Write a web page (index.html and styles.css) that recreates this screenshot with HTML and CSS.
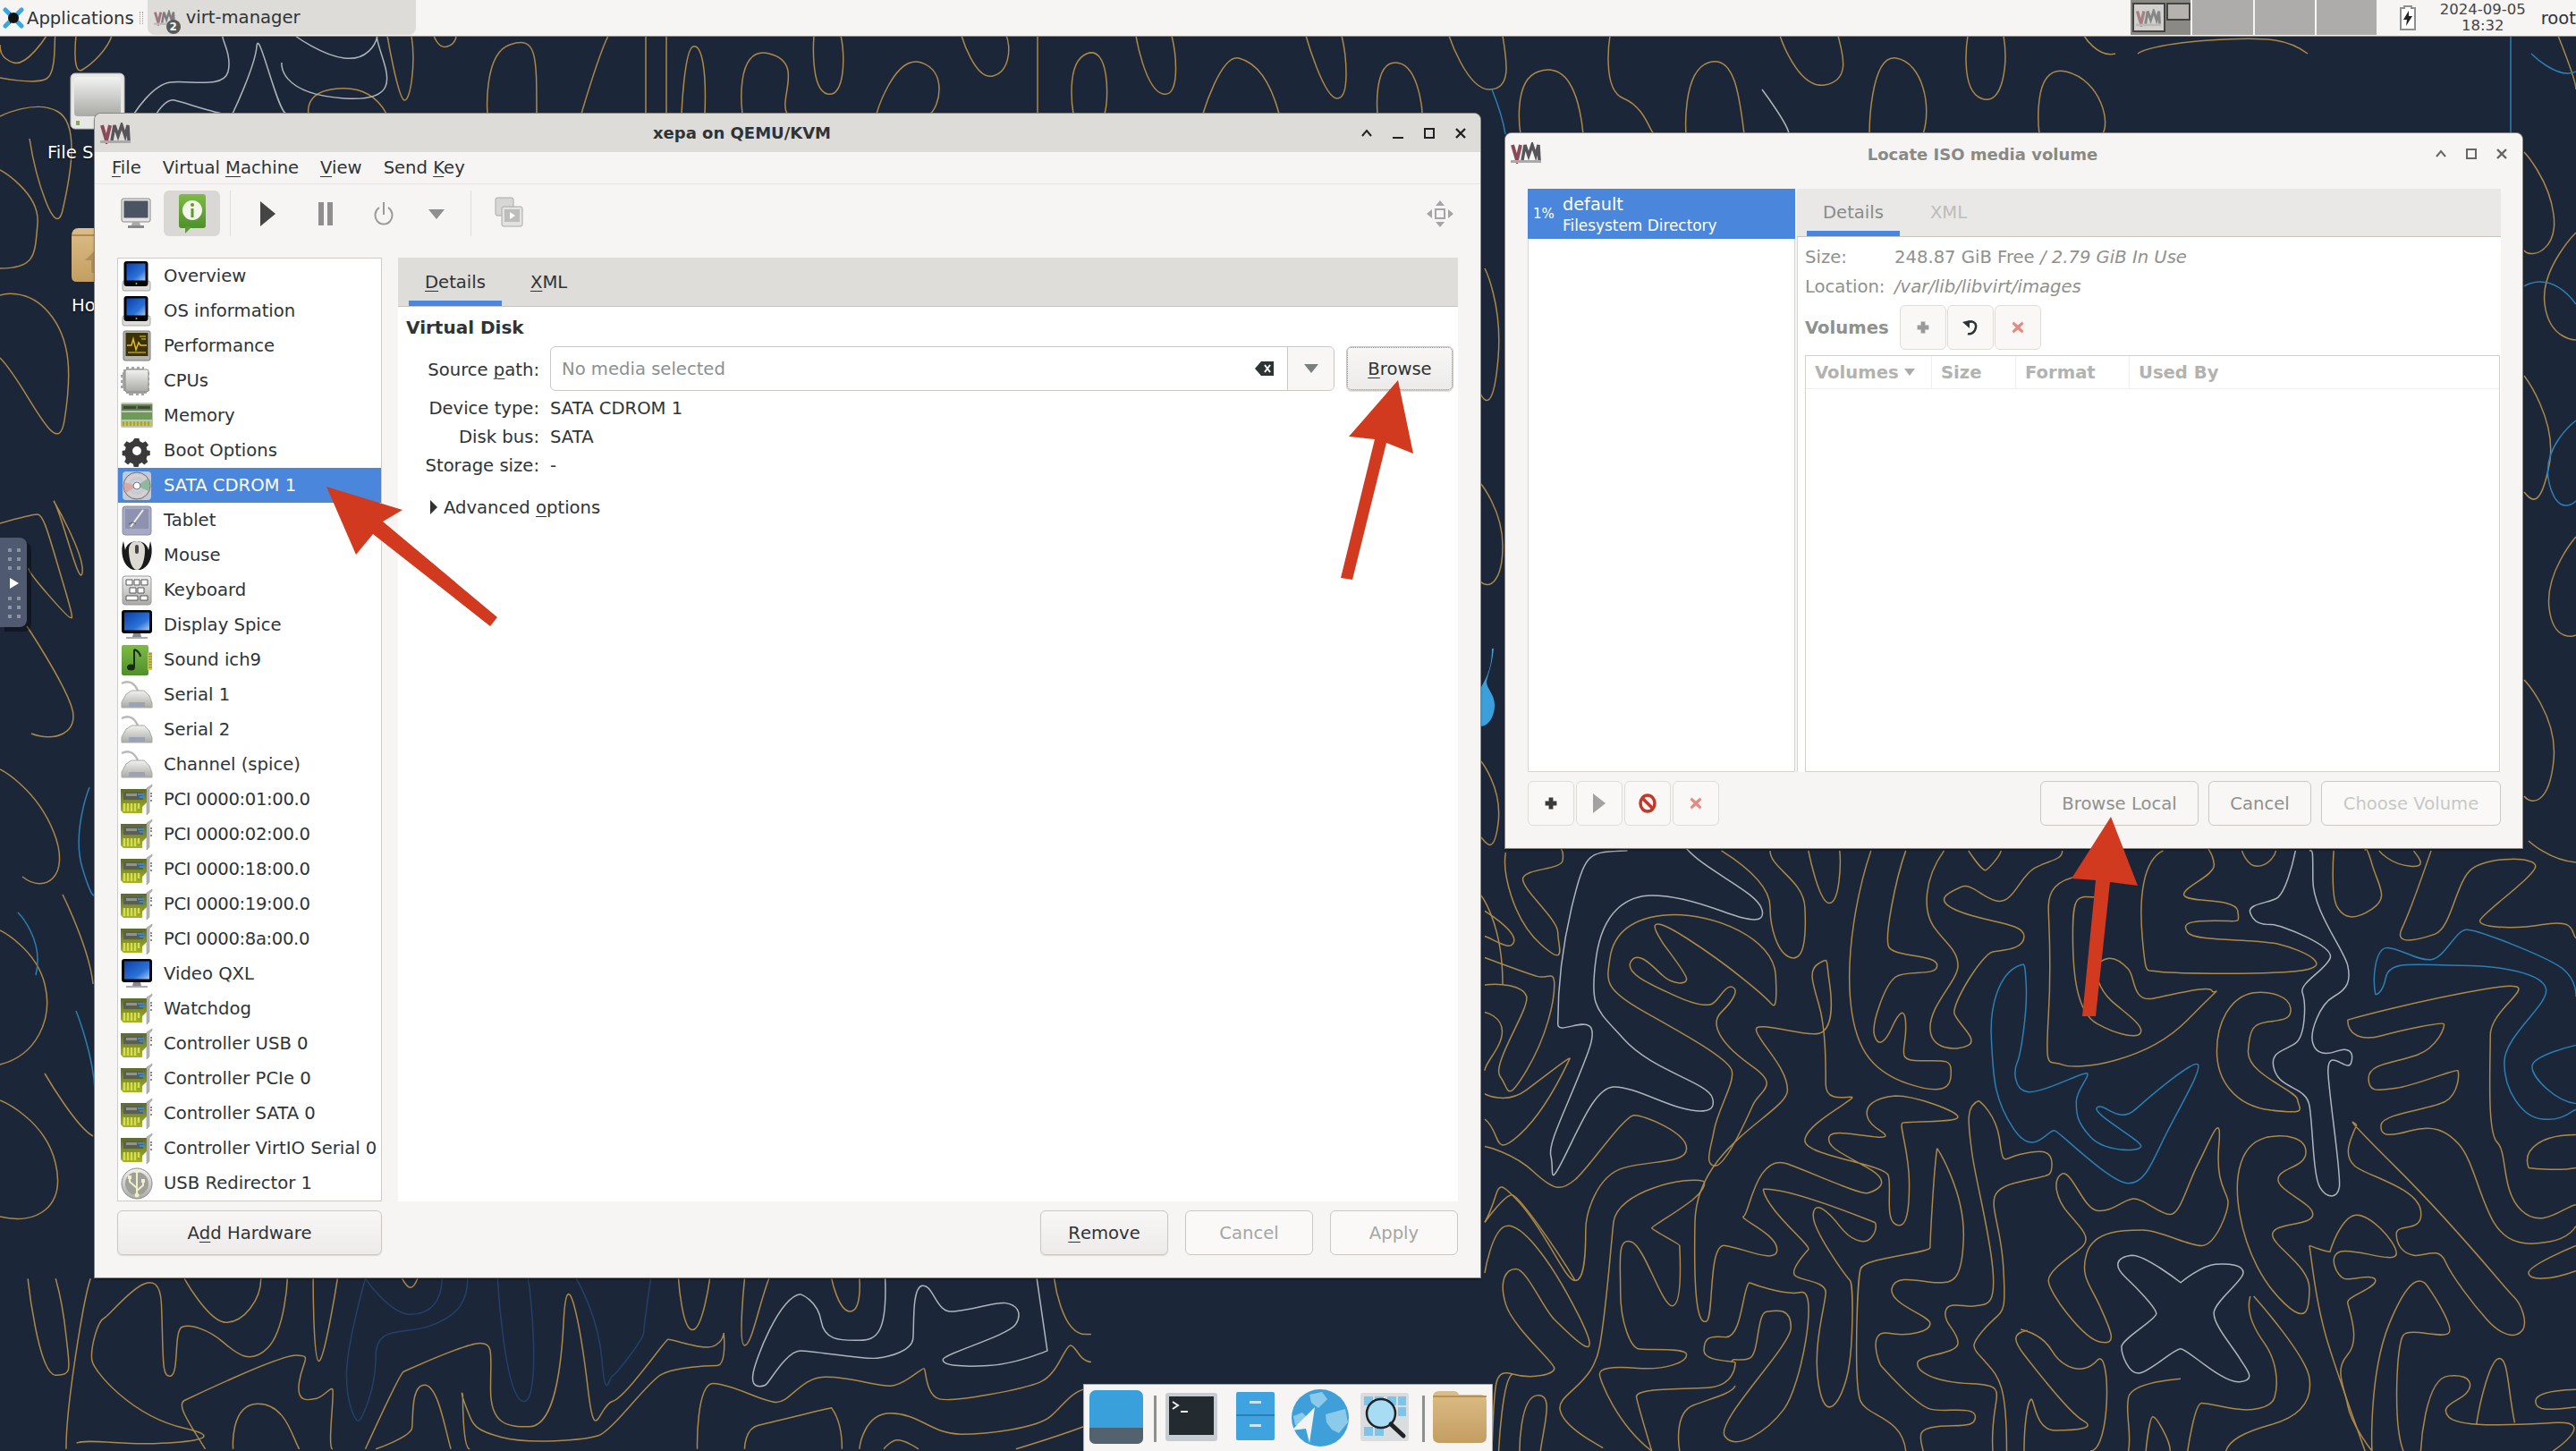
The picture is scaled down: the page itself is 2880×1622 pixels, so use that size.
FILE: index.html
```html
<!DOCTYPE html>
<html lang="en">
<head>
<meta charset="utf-8">
<title>virt-manager</title>
<link rel="stylesheet" href="styles.css">
</head>
<body>
<svg class="defs" width="0" height="0" aria-hidden="true">
  <defs>
    <linearGradient id="gScreen" x1="0" y1="0" x2="1" y2="1"><stop offset="0" stop-color="#0d3fa8"/><stop offset=".65" stop-color="#2a73d8"/><stop offset="1" stop-color="#a9c9ef"/></linearGradient>
    <linearGradient id="gSilver" x1="0" y1="0" x2="0" y2="1"><stop offset="0" stop-color="#f2f2f0"/><stop offset="1" stop-color="#a9a9a6"/></linearGradient>
    <linearGradient id="gOlive" x1="0" y1="0" x2="0" y2="1"><stop offset="0" stop-color="#5d6a2a"/><stop offset="1" stop-color="#a3b42a"/></linearGradient>
    <linearGradient id="gGreen" x1="0" y1="0" x2="0" y2="1"><stop offset="0" stop-color="#7dbb45"/><stop offset="1" stop-color="#4f8f2d"/></linearGradient>
    <linearGradient id="gFolder" x1="0" y1="0" x2="0" y2="1"><stop offset="0" stop-color="#dcbd86"/><stop offset="1" stop-color="#c39e62"/></linearGradient>
    <radialGradient id="gDisc"><stop offset="0" stop-color="#eee"/><stop offset=".5" stop-color="#c3c8d4"/><stop offset=".8" stop-color="#d8d2cf"/><stop offset="1" stop-color="#c4c8c8"/></radialGradient>
    <symbol id="i-ov" viewBox="0 0 36 36"><rect x="2" y="23" width="31" height="11" rx="2" fill="#dcdcd8" stroke="#a5a5a0"/><rect x="3.500" y="1" width="27" height="28" rx="3" fill="#050505"/><rect x="6.500" y="3.500" width="21" height="19" fill="url(#gScreen)"/><circle cx="17.500" cy="26" r="1" fill="#9acd32"/></symbol>
    <symbol id="i-perf" viewBox="0 0 36 36"><rect x="3" y="1" width="30" height="33" rx="2" fill="#b4b4ae" stroke="#777"/><rect x="5.500" y="3" width="25" height="26" fill="#3b3206"/><path d="M7 17h5l2-7 3 12 3-8 2 3h7" fill="none" stroke="#e3b92a" stroke-width="1.500"/><path d="M21 7h7M23 10h5M8 25h20" stroke="#b99b1c" stroke-width="1.500"/></symbol>
    <symbol id="i-cpu" viewBox="0 0 36 36"><path d="M3 8V5h3V2h3v2h3V2h3v2h3V2h3v2h3V2h2v3h3v3h3v3h-2v3h2v3h-2v3h2v3h-2v3h2v3h-3v3h-3v2h-3v-2h-3v2h-3v-2h-3v2H9v-2H6v-3H3v-3H0v-3h2v-3H0v-3h2v-3H0v-3h2V8z" fill="#a5a5a2"/><rect x="5" y="5" width="26" height="25" rx="2" fill="url(#gSilver)" stroke="#8a8a87"/></symbol>
    <symbol id="i-mem" viewBox="0 0 36 36"><rect x="0" y="3" width="36" height="28" rx="2" fill="#bfc5b2"/><rect x="1" y="5" width="34" height="7" fill="#5f8150"/><rect x="1" y="14" width="34" height="8" fill="#6e9a5a"/><rect x="3" y="7" width="14" height="3" fill="#3d4a3a"/><rect x="19" y="7" width="14" height="3" fill="#3d4a3a"/><rect x="1" y="24" width="34" height="5" fill="#c9c24a"/><path d="M3 24v5M7 24v5M11 24v5M15 24v5M19 24v5M23 24v5M27 24v5M31 24v5" stroke="#7f8a30"/></symbol>
    <symbol id="i-gear" viewBox="-4 -2 44 44"><path d="M15 3h6l1 4 4 2 4-2 4 5-3 3 1 4 4 1v6l-4 1-1 4 2 4-5 4-3-3-4 2-1 4h-6l-1-4-4-2-3 3-5-4 2-4-1-4-4-1v-6l4-1 1-4-3-3 4-5 4 2 4-2z" fill="#3a3a3a"/><circle cx="18" cy="20" r="6" fill="#fff"/></symbol>
    <symbol id="i-cd" viewBox="0 0 36 36"><rect x="2" y="2" width="32" height="32" rx="4" fill="#c2c9d8"/><circle cx="18" cy="18" r="15" fill="url(#gDisc)" stroke="#6d6d75"/><path d="M18 18 30 10A15 15 0 0 1 31 24z" fill="#8fb89a"/><path d="M18 18 6 26A15 15 0 0 1 4 14z" fill="#d8a8a4"/><circle cx="18" cy="18" r="4" fill="#fff" stroke="#777"/></symbol>
    <symbol id="i-tablet" viewBox="0 0 36 36"><rect x="2" y="2" width="32" height="32" rx="3" fill="#a6a9c4" stroke="#8a8da8"/><rect x="5" y="5" width="26" height="22" fill="#8f92ae"/><path d="M11 25 25 6" stroke="#eee" stroke-width="2"/><path d="M9 22q5-4 8 0" fill="none" stroke="#555"/></symbol>
    <symbol id="i-mouse" viewBox="0 0 36 36"><path d="M3 2C-1 14 2 30 14 34h8C34 30 37 14 33 2l-2 10c-1-6-6-10-13-10S6 6 5 12z" fill="#1a1a1a"/><path d="M9 12C9 5 13 2 18 2s9 3 9 10c0 9-3 22-9 22S9 21 9 12z" fill="#dcdad2"/><rect x="16" y="6" width="4" height="10" rx="2" fill="#444"/></symbol>
    <symbol id="i-kbd" viewBox="0 0 36 36"><rect x="2" y="2" width="32" height="32" rx="3" fill="url(#gSilver)" stroke="#999"/><path d="M6 6h7v6H6zM15 6h6v6h-6zM23 6h7v6h-7zM10 15h7v6h-7zM19 15h7v6h-7zM6 24h13v5H6zM22 24h8v5h-8z" fill="#fff" stroke="#555"/></symbol>
    <symbol id="i-disp" viewBox="0 0 36 36"><rect x="1" y="1" width="34" height="26" rx="3" fill="#050505"/><rect x="4" y="3.500" width="28" height="20" fill="url(#gScreen)"/><path d="M14 27h8l1 4h-10z" fill="#888"/><rect x="6" y="31" width="24" height="2" fill="#aaa"/></symbol>
    <symbol id="i-snd" viewBox="0 0 36 36"><rect x="1" y="1" width="30" height="34" rx="2" fill="url(#gGreen)"/><path d="M30 9h5v20h-5z" fill="#d7c44a"/><path d="M31 11h4M31 14h4M31 17h4M31 20h4M31 23h4M31 26h4" stroke="#80782a"/><path d="M15 6v19" stroke="#1a2a10" stroke-width="2"/><ellipse cx="11.500" cy="26" rx="4.500" ry="3.500" fill="#1a2a10"/><path d="M15 6q6 2 7 8" fill="none" stroke="#1a2a10" stroke-width="2"/></symbol>
    <symbol id="i-ser" viewBox="0 0 36 36"><path d="M1 5C10 0 16 6 19 13" fill="none" stroke="#b9b9b6" stroke-width="2.500"/><path d="M6 17 12 13h14l6 6 3 8v5H1v-6z" fill="url(#gSilver)" stroke="#a8a8a5"/><rect x="9" y="26" width="18" height="5" rx="1" fill="#9aa3b5"/></symbol>
    <symbol id="i-pci" viewBox="0 0 36 36"><path d="M0 6h29v15l-5 5v7H3l-3-3z" fill="url(#gOlive)"/><rect x="3" y="9" width="22" height="9" fill="#5b5f52"/><rect x="6" y="11" width="12" height="3" fill="#8d9488"/><path d="M19 11h7v2h-7zM21 14h5v2h-5z" fill="#3e89c8"/><path d="M4 22v9M8 22v9M12 22v9M16 22v9M20 22v6" stroke="#d8df4a" stroke-width="2.500"/><path d="M29 5 35 1v2l-3 3v26l-3 3z" fill="#b7b7b4" stroke="#8a8a86" stroke-width=".5"/><path d="M33 11h2M33 14h2M33 19h2" stroke="#888" stroke-width="2"/></symbol>
    <symbol id="i-usb" viewBox="0 0 36 36"><circle cx="18" cy="18" r="17" fill="url(#gSilver)" stroke="#8b8b88"/><circle cx="18" cy="18" r="13" fill="#9f9f9c"/><path d="M18 4v27M18 23 10 16v-4M18 26l7-6v-4" fill="none" stroke="#f1efc4" stroke-width="2"/><path d="m18 2 3 4h-6z" fill="#f1efc4"/><circle cx="18" cy="31" r="2.500" fill="#f1efc4"/><rect x="8" y="9" width="4" height="4" fill="#f1efc4"/><rect x="23" y="13" width="4" height="4" fill="#f1efc4"/></symbol>
    <symbol id="i-plus" viewBox="0 0 20 20"><path d="M7 2h6v5h5v6h-5v5H7v-5H2V7h5z"/></symbol>
    <symbol id="i-x" viewBox="0 0 20 20"><path d="M4 2 10 7l6-5 2 3-5 5 5 5-2 3-6-5-6 5-2-3 5-5-5-5z"/></symbol>
    <symbol id="i-vm" viewBox="0 0 34 24"><path d="M2 3 7 20 11 3" fill="none" stroke="#8a4a58" stroke-width="4"/><path d="M13 20 16 3l4 12 4-12 4 12 3-12 1 17" fill="none" stroke="#55555a" stroke-width="3.500"/><rect x="0" y="20" width="34" height="3" fill="#aaa"/></symbol>
  </defs>
</svg>

<svg class="wallpaper" width="2880" height="1622" viewBox="0 0 2880 1622" aria-hidden="true">
  <g class="gold">
    <path d="M52 40S30 75 15 70 0 55 0 50M0 87S40 95 52 88 60 40 62 40M85 40S80 85 92 78 120 55 125 40M0 130S40 110 65 125 78 200 70 235 40 200 33 155M0 190S45 215 42 250 40 300 0 300M0 330S30 320 55 350 80 420 72 470 30 430 0 400M60 560S95 620 92 640 68 570 60 560M0 585S35 575 42 575 55 600 70 650 80 690 78 690 30 640 32 635M30 700S70 760 80 790 60 830 35 820M0 860S40 880 60 930 50 1000 25 980M0 1040S40 1060 50 1100 40 1180 0 1190M0 1230S50 1250 62 1300 40 1370 0 1360M70 1000S100 1060 104 1100M50 1200S85 1260 104 1270"/>
    <path d="M345 127S340 105 370 100 420 105 432 127M433 40S445 110 452 112 465 70 460 40M485 40S490 55 500 52 510 40 510 40M545 127S540 60 570 50 600 60 600 127M650 127S670 60 680 40M722 127V40M745 127V40M762 127S765 55 775 52 790 80 788 127M830 127S820 50 860 60 870 110 880 127M910 40S905 100 925 105 945 60 940 40M980 127S1000 60 1030 70 1050 120 1040 127M1075 40S1090 90 1110 85 1130 50 1125 40M1160 127V40M1200 127S1190 70 1215 60 1240 110 1235 127M1270 40S1280 100 1300 105 1315 60 1310 40M1345 127S1365 60 1385 65 1420 90 1430 127M1460 40S1480 110 1495 110 1505 60 1500 40M1540 127S1535 70 1560 70 1590 120 1590 127M1620 40S1640 100 1665 100 1685 70 1680 40"/>
    <path d="M1700 150S1690 90 1720 80 1765 100 1770 150M1800 40S1790 100 1815 110 1845 150 1850 150M1885 150S1880 80 1910 70 1945 110 1950 150M1990 40S2010 100 2040 95 2060 60 2055 40M2090 150S2090 60 2120 65 2160 120 2150 150M2200 40S2190 100 2215 110 2245 70 2240 40M2280 150S2270 70 2310 80 2360 140 2350 150M2390 60S2400 50 2470 45 2560 45 2580 60M2330 40S2345 65 2365 60 2375 40M2420 150S2440 90 2480 100 2530 130 2520 150M2608 150V40M2640 150V40M2675 40S2680 100 2690 120 2712 150 2712 150M2750 150V40M2760 150S2765 55 2790 60 2790 150M2600 110S2640 85 2660 90 2700 120 2680 150"/>
    <path d="M2822 170S2850 200 2855 240 2830 290 2822 280M2880 260S2840 300 2845 340 2880 380 2880 380M2822 420S2860 470 2850 520 2830 560 2822 550M2880 600S2845 640 2850 680 2880 710 2880 710M2822 760S2860 800 2855 850 2830 900 2822 890M2860 40S2880 90 2880 100"/>
    <path d="M1660 300S1680 340 1675 400 1660 450 1655 440M1655 540S1680 570 1680 610 1665 660 1655 650M1655 850S1680 880 1675 920 1660 940 1655 935M1655 1000S1680 1030 1680 1100"/>
  </g>
  <g class="white">
    <path d="M330 40S360 62 385 65 420 50 422 40M150 127S170 95 190 92 250 100 255 80 245 40 250 40M175 127S185 110 195 112 235 125 250 127M260 127S285 75 287 52 310 125 320 127M315 70S310 105 385 110 425 70 421 40M1970 100S2000 140 2000 150"/>
  </g>
  <g class="blue">
    <path d="M2807 40V150M2830 60S2860 90 2880 80M2822 320S2850 300 2880 340M2880 470S2840 500 2850 540 2880 560 2880 560M100 880S80 930 92 970 106 1000 106 1000M85 1130S105 1180 106 1220M20 1020S50 1050 40 1090M1668 100S1680 130 1683 150"/>
  </g>
  <g transform="translate(1660,940) scale(.778,.435)">
    <g class="gold">
      <path d="M30 30C25 80 40 200 80 265S105 270 105 235 50 120 55 95 110 75 112 50 110 25 110 20M0 180S45 230 42 258 15 255 0 245M0 300S60 340 75 348 100 330 100 370 90 500 60 590 35 635 22 605 65 430 60 400 20 365 0 370M0 440S25 450 25 490 0 570 0 590M0 650S30 680 60 640 125 550 122 560 90 690 50 755 25 750 0 715"/>
      <path d="M0 785S40 800 70 850 110 900 130 870 200 705 215 705 290 750 290 790 240 820 200 840 145 960 145 1000 145 1130 130 1130 90 1010 50 930 25 900 0 980"/>
      <path d="M265 190C330 185 415 250 418 345S415 425 410 415 360 330 290 250 250 245 255 260 290 340 290 355 270 370 255 345 220 280 210 310 240 370 270 395 315 425 325 420 345 370 355 375 360 405 340 440 345 530 385 580 395 640 385 680 345 840 330 835 325 790 330 740 360 620 355 590 290 500 230 440 175 360 180 300 210 195 265 190"/>
      <path d="M340 25C380 70 410 120 410 170S420 290 440 300 462 240 460 170 410 70 410 25M465 25S480 160 495 160 512 60 510 25"/>
      <path d="M555 25C535 130 520 280 525 400S550 590 610 625 670 620 670 590 660 565 625 565 605 540 605 480 595 440 585 480 565 530 560 500 575 370 590 350 650 350 650 320 585 300 580 270 590 100 605 25"/>
      <path d="M660 25C630 100 630 180 645 220S680 280 680 320 640 420 640 480 680 540 695 525 680 470 675 445 715 290 730 285 775 280 775 245 720 210 680 180 670 130 685 118 720 155 740 155 770 90 790 70 830 50 830 25M695 25S715 80 720 75 740 40 742 25"/>
      <path d="M855 90C820 100 810 130 810 170S815 300 810 450 810 560 830 575 950 570 1010 460 1048 400 1045 385 990 395 960 405 935 350 925 330 900 290 885 310 885 385 900 410 945 470 943 490 910 500 880 470 845 340 845 240 850 140 880 145"/>
      <path d="M975 25C945 50 940 150 945 250S950 330 965 335 1100 345 1165 335 1175 280 1140 265 1020 260 1010 235 1015 205 1050 205 1085 215 1082 180 1010 160 1005 140 1050 90 1048 60 1040 25 1040 20M1088 25S1095 65 1110 65 1135 40 1137 25M1220 25S1215 140 1225 170 1250 205 1275 175 1285 120 1275 60 1265 25 1265 25M1285 25S1300 60 1330 65 1335 30 1335 25"/>
      <path d="M1360 25S1330 180 1318 225 1340 255 1365 240 1395 100 1420 70 1510 40 1510 65 1430 190 1430 205 1470 230 1520 215 1560 235 1568 250M1500 0S1530 50 1568 55"/>
      <path d="M1105 390C1070 400 1052 470 1052 540S1075 680 1130 692 1170 690 1168 665 1095 600 1097 540 1105 470 1125 465 1160 460 1158 430 1130 385 1105 390"/>
      <path d="M1240 460C1240 500 1260 515 1290 500S1375 465 1378 470 1370 530 1340 550 1270 570 1270 610 1285 640 1310 635 1395 585 1398 590 1400 650 1380 670 1290 700 1288 730 1300 760 1330 745 1380 740 1400 780 1430 920 1450 980 1500 1040 1530 1030 1568 990 1568 990M1240 460S1340 410 1440 380 1445 420 1445 500 1440 750 1455 775 1460 900 1490 950 1550 940 1568 935M1500 840C1490 790 1520 755 1568 755M1500 840S1540 850 1568 840M1568 1040S1500 1090 1500 1110 1530 1130 1568 1105"/>
      <path d="M1253 730C1240 780 1235 810 1250 835S1340 890 1345 950 1310 980 1310 1010 1320 1060 1335 1065 1370 1040 1380 1080 1420 1190 1440 1230 1480 1280 1490 1260 1490 1190 1478 1170 1400 1000 1310 840 1253 730 1253 730"/>
      <path d="M1130 760C1085 770 1075 860 1085 960S1120 1140 1150 1190 1185 1210 1185 1150 1130 1040 1132 1010 1190 990 1190 960 1140 900 1140 870 1180 840 1180 800 1150 755 1130 760"/>
      <path d="M830 855C815 870 820 920 840 960S870 1020 860 1040 810 1100 810 1130 860 1280 885 1288 900 1260 885 1200 855 1120 865 1060 920 1000 945 1000 1010 1040 1030 1040 1070 950 1068 925 1050 880 1055 780 1040 780 1025 830 1000 960 985 960 945 915 930 920 900 955 880 950 845 850 830 855"/>
      <path d="M590 655C560 660 545 680 550 710S580 750 575 760 500 735 495 760 510 800 550 840 560 900 550 905 480 860 435 830 380 960 372 965 420 1010 420 1050 370 1045 345 1040 330 1230 318 1235 300 1180 302 980 435 700 435 640 390 510 390 485 460 505 480 495 500 420 495 360 495 300 480 315 470 360 480 420 490 570 490 625 530 650 528 660 460 730 460 770 575 830 580 860 575 970 590 985 610 960 610 880 595 730 600 725 680 725 680 710 620 655 590 655"/>
      <path d="M400 895C405 950 470 1040 465 1050S440 1100 445 1115 490 1130 490 1160 470 1300 480 1400 510 1445 520 1380 530 1140 525 1130 470 1000 472 960 495 955 510 990 545 1040 555 1020 562 980 560 980 440 890 400 895"/>
      <path d="M650 790C645 850 640 1030 640 1045S545 1070 540 1100 530 1400 540 1440 600 1480 605 1568M650 790S690 900 688 1020 670 1135 650 1135 590 1110 585 1150 640 1220 640 1240 610 1275 580 1265 565 1340 570 1350 620 1450 640 1460 705 1450 705 1480 680 1500 650 1505 625 1530 630 1568"/>
      <path d="M710 668C690 680 695 730 700 800S725 1000 730 1100 720 1190 705 1195 665 1180 662 1210 680 1260 680 1290 625 1320 622 1340 640 1390 700 1395 725 1420 730 1568M710 668S735 700 740 770 745 815 770 805 815 790 815 830 810 855 760 880 740 950 745 1090 745 1200 720 1250 700 1300 720 1340 750 1400 750 1568"/>
      <path d="M780 1258C755 1265 762 1290 775 1320S840 1470 860 1490 850 1515 820 1515 790 1430 785 1435 775 1500 775 1568M770 1255S800 1265 815 1310 860 1375 880 1335 900 1568 870 1568"/>
      <path d="M1100 1170C1095 1200 1100 1240 1120 1290S1140 1400 1135 1430 1100 1465 1080 1460 1040 1445 1030 1445 1010 1568 1010 1568M1000 1382S930 1390 925 1430 930 1520 925 1568M1185 1040C1190 1100 1195 1200 1215 1310S1240 1440 1265 1568M1105 1170S1180 1320 1185 1380 1170 1480 1130 1500 1070 1540 1065 1568M950 1568S955 1480 960 1480 985 1540 985 1568"/>
      <path d="M1185 1040S1215 1060 1215 1055 1230 970 1250 962 1310 1030 1310 1060 1250 1045 1230 1055 1225 1120 1235 1125 1280 1110 1280 1130 1240 1170 1240 1185 1260 1280 1240 1320 1235 1400 1240 1450 1275 1568 1275 1568M1275 1568S1270 1370 1300 1240 1345 1130 1350 1135 1395 1250 1385 1265 1330 1250 1320 1270 1305 1500 1320 1568M1345 1568S1350 1380 1385 1375 1420 1400 1410 1420 1370 1450 1385 1480 1480 1500 1540 1495 1535 1568 1535 1568M1425 1500C1430 1440 1445 1330 1458 1330S1470 1410 1480 1495M1568 1410S1510 1410 1510 1440 1540 1460 1568 1455"/>
      <path d="M0 1110S10 1000 30 990 90 1060 135 1220 115 1255 100 1230 60 1100 45 1100 20 1130 30 1190 100 1340 100 1355 70 1385 40 1370 15 1400 10 1568M0 980S30 905 40 910 100 1040 130 1130"/>
      <path d="M315 875C290 860 190 900 185 980S175 1200 165 1300 105 1420 108 1460 150 1540 170 1560M315 875S320 890 300 920 240 990 240 995 280 1035 280 1040 285 1190 270 1195 230 1040 210 1030 195 1080 195 1160 210 1300 220 1305 290 1300 290 1320 260 1360 220 1355 165 1355 165 1370 190 1500 240 1568"/>
      <path d="M380 1135C370 1150 370 1280 345 1275S315 1280 315 1310 360 1335 360 1340 360 1400 320 1405 215 1405 218 1430 240 1568 240 1568M380 1135S430 1170 455 1160 455 1400 430 1460 360 1568 345 1530 440 1300 440 1250 420 1205 405 1210 395 1320 380 1330 355 1325 355 1340M280 1568S270 1470 300 1450 355 1420 360 1400M50 1568S50 1430 75 1425 85 1500 80 1568M20 1568S25 1380 40 1370"/>
    </g>
    <g class="white">
      <path d="M290 20C320 80 390 130 398 175S370 200 340 180 270 140 240 140 170 170 160 300 160 430 200 510 320 620 327 660 310 700 280 685 210 630 185 632 140 720 115 810 100 845 95 810 120 680 148 545 105 510 105 470 105 320 125 170 150 30 205 25"/>
      <path d="M1165 25C1160 70 1150 130 1140 145S1095 160 1100 185 1115 215 1130 215 1220 270 1215 300 1170 365 1175 390 1180 500 1165 520 1125 540 1135 590 1180 630 1185 680 1190 860 1200 890 1225 920 1228 890 1215 680 1212 600 1240 600 1245 570 1240 530 1225 540 1195 550 1190 520 1200 420 1220 400 1245 360 1240 320 1190 180 1190 100 1190 25 1185 25"/>
      <path d="M930 1065C905 1070 905 1095 920 1120S965 1200 965 1215 915 1280 915 1300 925 1370 940 1368 990 1305 1000 1305 1060 1395 1085 1390 1095 1360 1085 1330 1045 1240 1048 1210 1090 1130 1090 1110 1070 1085 1050 1088 1000 1135 1000 1135 950 1065 930 1065"/>
    </g>
    <g class="blue">
      <path d="M1280 395C1275 350 1280 280 1295 275S1340 310 1360 305 1395 230 1410 228 1530 300 1550 330 1568 400 1568 400M1280 395S1290 395 1295 350 1340 320 1400 320 1520 340 1525 380 1465 500 1465 570 1490 710 1520 715 1560 695 1568 690M1568 525S1505 550 1505 580 1540 670 1568 675"/>
      <path d="M768 320C740 340 725 420 728 510S730 660 760 740 810 735 820 745 900 880 925 880 960 820 980 750 1030 590 1025 575 960 650 935 690 890 670 880 685 945 770 943 785 890 800 870 760 850 700 850 670 872 600 865 597 800 650 780 645 760 590 765 570 780 440 778 370 775 320 768 320"/>
    </g>
  </g>
  <g transform="translate(0,1420) scale(.778,.333)">
    <g class="gold">
      <path d="M40 28S55 350 80 352 100 330 95 220 80 28 80 28M130 28C120 100 95 450 95 600M265 28S300 175 325 175 375 100 375 28M413 28S410 200 385 260 340 280 320 240 275 180 262 190 258 350 245 355 235 300 232 115 160 150 150 160 130 260 132 300 190 490 265 530 245 580 210 582 120 565 110 580M450 28S450 300 458 305 485 28 485 28"/>
      <path d="M265 437S400 285 425 285 435 300 430 375 445 435 455 430 475 390 478 400 470 600 478 600M265 437C255 450 265 490 295 600M335 600S330 450 370 448 420 560 430 600"/>
      <path d="M525 600S575 345 580 340 670 245 690 245 705 280 705 400 730 525 760 525 805 400 810 170 835 200 845 400 860 455 880 440 955 235 960 232 1010 270 1025 255 1040 210 1040 210 1045 320 1030 320 970 325 950 350 880 540 860 555 760 585 720 560 680 520 670 460 665 410 665 420 665 600 675 600M540 600S590 560 592 530 590 385 610 385 640 540 648 600"/>
      <path d="M975 28S980 200 995 200 1020 28 1020 28M1070 28S1060 250 1070 252 1090 120 1105 28M1195 28S1205 140 1222 138 1235 28 1235 28M1515 28S1525 215 1560 215L1568 215M578 28S585 58 590 58 600 28 600 28"/>
      <path d="M1002 600S1000 380 1025 380 1095 440 1115 443 1150 360 1185 358 1260 390 1280 388 1325 325 1328 330 1330 420 1350 432 1470 400 1495 375 1530 255 1538 252 1550 305 1568 308M1070 600S1070 530 1090 520 1195 460 1195 462 1210 500 1210 600M1235 600S1240 480 1280 480 1340 550 1380 550 1490 530 1510 490 1540 400 1568 395M1270 600S1280 570 1290 570 1320 600 1320 600M1460 600S1530 550 1568 515"/>
    </g>
    <g class="white">
      <path d="M1150 80C1120 90 1085 300 1082 350S1095 390 1100 385 1130 270 1150 270 1240 300 1260 295 1310 270 1312 230 1310 60 1325 52 1345 135 1365 138 1430 105 1445 110 1470 140 1460 180 1355 280 1355 300 1380 325 1420 320 1505 270 1505 270L1490 28M1150 80S1175 100 1180 170 1210 235 1235 235 1275 210 1272 28"/>
    </g>
    <g class="dim">
      <path d="M525 28S498 250 498 350 510 505 515 505 540 400 540 290 580 220 620 185 672 100 672 28M525 28S560 148 590 148 635 100 635 28M715 28S725 430 752 440 762 28 758 28M828 28S860 150 865 300 875 360 880 355 925 230 925 210 935 28 935 28"/>
    </g>
  </g>
  <path class="blob" d="M1668 725C1668 750 1660 760 1655 770V812C1665 812 1671 800 1671 788 1671 776 1662 770 1662 762 1664 752 1668 745 1670 725Z"/>
</svg>

<div class="desk-icon desk-fs">
  <svg width="62" height="64" viewBox="0 0 62 64"><rect x="1" y="1" width="60" height="62" rx="5" fill="#e8e8e6" stroke="#b8b8b5"/><rect x="5" y="5" width="52" height="44" rx="4" fill="url(#gSilver)"/><rect x="7" y="54" width="4" height="5" fill="#7fae4c"/></svg>
  <span class="desk-label">File System</span>
</div>
<div class="desk-icon desk-home">
  <svg width="62" height="64" viewBox="0 0 62 64"><path d="M2 12Q2 3 10 3h24q6 0 8 6h14q5 0 5 6v42q0 6-6 6H8q-6 0-6-6z" fill="url(#gFolder)"/><path d="M2 11h59" stroke="#ad8a52" stroke-width="2"/><path d="m31 25 14 14h-7v14H24V39h-7z" fill="#b08e58"/></svg>
  <span class="desk-label">Home</span>
</div>

<div class="handle">
  <span class="handle-dots"><i></i><i></i><i></i><i></i><i></i><i></i></span>
  <svg width="12" height="14" viewBox="0 0 12 14"><path d="M1 1l10 6-10 6z" fill="#fff"/></svg>
  <span class="handle-dots"><i></i><i></i><i></i><i></i><i></i><i></i></span>
</div>

<header class="topbar">
  <svg class="top-logo" width="24" height="24" viewBox="0 0 24 24"><path d="M3 3 21 21M21 3 3 21" stroke="#3aa8e0" stroke-width="5" stroke-linecap="round"/><circle cx="12" cy="12" r="6" fill="#111"/><path d="M8 6l8 6-8 6z" fill="#111"/></svg>
  <span class="top-apps">Applications</span>
  <span class="top-grip"></span>
  <div class="task">
    <span class="task-ico"><svg width="24" height="18"><use href="#i-vm"/></svg><b>2</b></span>
    <span>virt-manager</span>
  </div>
  <div class="spacer"></div>
  <div class="pager">
    <div class="ws ws-on"><span class="ws-main"><svg class="ws-vm" width="30" height="20"><use href="#i-vm"/></svg></span><span class="ws-sub"></span></div>
    <div class="ws"></div>
    <div class="ws"></div>
    <div class="ws"></div>
  </div>
  <svg class="battery" width="20" height="28" viewBox="0 0 20 28"><path d="M6 3V1h8v2h4v24H2V3z" fill="#fff" stroke="#8f8f8f" stroke-width="2"/><path d="M11 6 5 16h4l-1 7 7-11h-4z" fill="#222"/></svg>
  <div class="clock"><span>2024-09-05</span><span>18:32</span></div>
  <span class="top-user">root</span>
</header>

<section class="win win-main">
  <div class="titlebar title-active">
    <svg class="vm-logo" width="34" height="24"><use href="#i-vm"/></svg>
    <h1 class="wtitle">xepa on QEMU/KVM</h1>
    <div class="wctl wctl-4">
      <svg width="14" height="14" viewBox="0 0 14 14"><path d="M2 10 7 4l5 6" fill="none" stroke="#222" stroke-width="2"/></svg>
      <svg width="14" height="14" viewBox="0 0 14 14"><path d="M1 12h12" stroke="#222" stroke-width="2"/></svg>
      <svg width="14" height="14" viewBox="0 0 14 14"><rect x="2" y="2" width="10" height="10" fill="none" stroke="#222" stroke-width="2"/></svg>
      <svg width="14" height="14" viewBox="0 0 14 14"><path d="M2 2l10 10M12 2 2 12" stroke="#222" stroke-width="2.400"/></svg>
    </div>
  </div>
  <nav class="menubar">
    <span><u>F</u>ile</span><span>Virtual <u>M</u>achine</span><span><u>V</u>iew</span><span>Send <u>K</u>ey</span>
  </nav>
  <div class="toolbar">
    <span class="tb tb-w"><svg width="34" height="42" viewBox="0 0 34 42"><rect x="1" y="4" width="32" height="26" rx="2" fill="#e4e4e2" stroke="#888"/><rect x="3.500" y="6.500" width="27" height="19" fill="#4b5460"/><path d="M13 30h8l1 4H12z" fill="#aaa"/><rect x="8" y="34" width="18" height="3" fill="#888"/></svg></span>
    <span class="tb tb-w tb-on"><svg width="32" height="48" viewBox="0 0 32 48"><rect x="1" y="2" width="30" height="38" rx="3" fill="url(#gGreen)"/><path d="M8 38v8l8-8z" fill="#5c9a33"/><circle cx="16" cy="20" r="11" fill="#f3f6e8"/><circle cx="16" cy="14" r="2" fill="#5c9a33"/><rect x="14.500" y="18" width="3" height="10" fill="#5c9a33"/></svg></span>
    <span class="tb-sep"></span>
    <span class="tb"><svg width="20" height="30" viewBox="0 0 20 30"><path d="M2 1l17 14L2 29z" fill="#444"/></svg></span>
    <span class="tb tb-gap"><svg width="18" height="30" viewBox="0 0 18 30"><path d="M1 2h6v26H1zM11 2h6v26h-6z" fill="#8f8f8f"/></svg></span>
    <span class="tb tb-gap"><svg width="22" height="28" viewBox="0 0 22 28"><path d="M6 7a9.500 10 0 1 0 10 0" fill="none" stroke="#9a9a9a" stroke-width="2"/><path d="M11 1v14" stroke="#9a9a9a" stroke-width="2"/></svg></span>
    <span class="tb tb-tight"><svg width="18" height="12" viewBox="0 0 18 12"><path d="M0 1h18l-9 11z" fill="#8f8f8f"/></svg></span>
    <span class="tb-sep tb-sep2"></span>
    <span class="tb"><svg width="32" height="40" viewBox="0 0 32 40"><rect x="1" y="2" width="20" height="20" rx="2" fill="#d7d7d5" stroke="#aaa"/><rect x="8" y="12" width="23" height="22" rx="2" fill="#e2e2e0" stroke="#aaa"/><rect x="11" y="15" width="17" height="14" fill="#bdbdbb"/><path d="M17 18l6 4-6 4z" fill="#fff"/></svg></span>
    <div class="spacer"></div>
    <span class="tb"><svg width="30" height="30" viewBox="0 0 30 30"><rect x="10" y="10" width="10" height="10" fill="none" stroke="#a5a5a5" stroke-width="2"/><path d="M15 0l5 6h-10zM15 30l5-6h-10zM0 15l6-5v10zM30 15l-6-5v10z" fill="#a5a5a5"/></svg></span>
  </div>
  <div class="mbody">
    <ul class="hw-list">
      <li class="hw"><svg><use href="#i-ov"/></svg>Overview</li>
      <li class="hw"><svg><use href="#i-ov"/></svg>OS information</li>
      <li class="hw"><svg><use href="#i-perf"/></svg>Performance</li>
      <li class="hw"><svg><use href="#i-cpu"/></svg>CPUs</li>
      <li class="hw"><svg><use href="#i-mem"/></svg>Memory</li>
      <li class="hw"><svg><use href="#i-gear"/></svg>Boot Options</li>
      <li class="hw hw-sel"><svg><use href="#i-cd"/></svg>SATA CDROM 1</li>
      <li class="hw"><svg><use href="#i-tablet"/></svg>Tablet</li>
      <li class="hw"><svg><use href="#i-mouse"/></svg>Mouse</li>
      <li class="hw"><svg><use href="#i-kbd"/></svg>Keyboard</li>
      <li class="hw"><svg><use href="#i-disp"/></svg>Display Spice</li>
      <li class="hw"><svg><use href="#i-snd"/></svg>Sound ich9</li>
      <li class="hw"><svg><use href="#i-ser"/></svg>Serial 1</li>
      <li class="hw"><svg><use href="#i-ser"/></svg>Serial 2</li>
      <li class="hw"><svg><use href="#i-ser"/></svg>Channel (spice)</li>
      <li class="hw hw-num"><svg><use href="#i-pci"/></svg>PCI 0000:01:00.0</li>
      <li class="hw hw-num"><svg><use href="#i-pci"/></svg>PCI 0000:02:00.0</li>
      <li class="hw hw-num"><svg><use href="#i-pci"/></svg>PCI 0000:18:00.0</li>
      <li class="hw hw-num"><svg><use href="#i-pci"/></svg>PCI 0000:19:00.0</li>
      <li class="hw hw-num"><svg><use href="#i-pci"/></svg>PCI 0000:8a:00.0</li>
      <li class="hw"><svg><use href="#i-disp"/></svg>Video QXL</li>
      <li class="hw"><svg><use href="#i-pci"/></svg>Watchdog</li>
      <li class="hw"><svg><use href="#i-pci"/></svg>Controller USB 0</li>
      <li class="hw"><svg><use href="#i-pci"/></svg>Controller PCIe 0</li>
      <li class="hw"><svg><use href="#i-pci"/></svg>Controller SATA 0</li>
      <li class="hw"><svg><use href="#i-pci"/></svg>Controller VirtIO Serial 0</li>
      <li class="hw"><svg><use href="#i-usb"/></svg>USB Redirector 1</li>
    </ul>
    <div class="panel">
      <div class="tabs tabs-main">
        <span class="tab tab-on"><u>D</u>etails</span>
        <span class="tab"><u>X</u>ML</span>
      </div>
      <div class="panel-body">
        <h2 class="vd-title">Virtual Disk</h2>
        <div class="form">
          <span class="lbl">Source <u>p</u>ath:</span>
          <div class="src-row">
            <div class="entry">
              <span class="entry-text">No media selected</span>
              <svg width="22" height="18" viewBox="0 0 22 18"><path d="M7 1h14v16H7L0 9z" fill="#2e3436"/><path d="M11 5l6 8M17 5l-6 8" stroke="#fff" stroke-width="2"/></svg>
              <span class="entry-drop"><svg width="16" height="10" viewBox="0 0 16 10"><path d="M0 0h16l-8 10z" fill="#7b7f80"/></svg></span>
            </div>
            <span class="btn btn-browse"><u>B</u>rowse</span>
          </div>
          <span class="lbl lbl-row">Device type:</span><span class="val">SATA CDROM 1</span>
          <span class="lbl lbl-row">Disk bus:</span><span class="val">SATA</span>
          <span class="lbl lbl-row">Storage size:</span><span class="val">-</span>
        </div>
        <div class="advanced"><svg width="10" height="18" viewBox="0 0 10 18"><path d="M1 1l8 8-8 8z" fill="#2e3436"/></svg><span>Advanced <u>o</u>ptions</span></div>
      </div>
    </div>
    <span class="btn btn-add">A<u>d</u>d Hardware</span>
    <div class="actions">
      <span class="btn btn-act"><u>R</u>emove</span>
      <span class="btn btn-act btn-off">Cancel</span>
      <span class="btn btn-act btn-off">Apply</span>
    </div>
  </div>
</section>

<section class="win win-iso">
  <div class="titlebar title-idle">
    <svg class="vm-logo" width="34" height="24"><use href="#i-vm"/></svg>
    <h1 class="wtitle wtitle-idle">Locate ISO media volume</h1>
    <div class="wctl wctl-3">
      <svg width="14" height="14" viewBox="0 0 14 14"><path d="M2 10 7 4l5 6" fill="none" stroke="#666" stroke-width="2"/></svg>
      <svg width="14" height="14" viewBox="0 0 14 14"><rect x="2" y="2" width="10" height="10" fill="none" stroke="#666" stroke-width="2"/></svg>
      <svg width="14" height="14" viewBox="0 0 14 14"><path d="M2 2l10 10M12 2 2 12" stroke="#666" stroke-width="2.400"/></svg>
    </div>
  </div>
  <div class="ibody">
    <div class="pool-list">
      <div class="pool pool-sel">
        <span class="pool-pct">1%</span>
        <span class="pool-txt"><span class="pool-name">default</span><span class="pool-type">Filesystem Directory</span></span>
      </div>
    </div>
    <div class="ipanel">
      <div class="tabs tabs-iso">
        <span class="tab tab-on tab-dim">Details</span>
        <span class="tab tab-fade">XML</span>
      </div>
      <div class="ipanel-body">
        <div class="info">
          <span>Size:</span><span>248.87 GiB Free <em>/ 2.79 GiB In Use</em></span>
          <span>Location:</span><em>/var/lib/libvirt/images</em>
        </div>
        <div class="vol-row">
          <b class="vol-lbl">Volumes</b>
          <span class="ibtn"><svg width="16" height="16" class="fill-grey"><use href="#i-plus"/></svg></span>
          <span class="ibtn"><svg width="18" height="22" viewBox="0 0 18 22"><path d="M5 7C9 2 16 5 15 11c-1 6-6 8-9 7" fill="none" stroke="#2e3436" stroke-width="2.500"/><path d="M0 5l8-2v9z" fill="#2e3436"/></svg></span>
          <span class="ibtn"><svg width="16" height="16" class="fill-pink"><use href="#i-x"/></svg></span>
        </div>
        <div class="tree">
          <div class="tree-head">
            <span class="col col-a">Volumes <svg width="12" height="8" viewBox="0 0 12 8"><path d="M0 0h12L6 8z" fill="#aaa"/></svg></span>
            <span class="col col-b">Size</span>
            <span class="col col-c">Format</span>
            <span class="col">Used By</span>
          </div>
        </div>
      </div>
    </div>
    <div class="ifoot">
      <span class="ibtn"><svg width="16" height="16" class="fill-dark"><use href="#i-plus"/></svg></span>
      <span class="ibtn"><svg width="14" height="22" viewBox="0 0 14 22"><path d="M0 0l14 11L0 22z" fill="#a2a2a2"/></svg></span>
      <span class="ibtn"><svg width="20" height="22" viewBox="0 0 20 22"><ellipse cx="10" cy="11" rx="8" ry="9" fill="none" stroke="#c0392b" stroke-width="3.500"/><path d="M4 5l12 12" stroke="#c0392b" stroke-width="3.500"/></svg></span>
      <span class="ibtn"><svg width="16" height="16" class="fill-pink"><use href="#i-x"/></svg></span>
      <div class="spacer"></div>
      <span class="btn btn-dim btn-bl">Browse Local</span>
      <span class="btn btn-dim btn-cn">Cancel</span>
      <span class="btn btn-off btn-cv">Choose Volume</span>
    </div>
  </div>
</section>

<div class="dock">
  <svg class="d1" width="60" height="60" viewBox="0 0 60 60"><rect width="60" height="60" rx="7" fill="#39a0dc"/><path d="M0 42h60v11q0 7-7 7H7q-7 0-7-7z" fill="#52626e"/></svg>
  <span class="dsep d2"></span>
  <svg class="d3" width="58" height="54" viewBox="0 0 58 54"><rect width="58" height="54" rx="3" fill="#c7ccd0"/><rect x="4" y="4" width="50" height="43" fill="#232a30"/><path d="M8 10l6 4-6 4" fill="none" stroke="#eee" stroke-width="2"/><path d="M17 21h8" stroke="#eee" stroke-width="2"/></svg>
  <svg class="d4" width="43" height="56" viewBox="0 0 43 56"><rect width="43" height="54" rx="2" fill="#3ea3df"/><path d="M0 26h43" stroke="#2b7fb4" stroke-width="2"/><rect x="15" y="10" width="13" height="3" fill="#cfe3ee"/><rect x="15" y="36" width="13" height="3" fill="#cfe3ee"/></svg>
  <svg class="d5" width="64" height="64" viewBox="0 0 64 64"><circle cx="32" cy="32" r="32" fill="#3f9fd8"/><path d="M20 6 34 3l6 8-10 10-8-6zM38 28l22-6 3 15-10 12-8-4-6-8zM2 30l10-4 6 6-4 10-10-2z" fill="#8ccaec"/><path d="M26 20 20 60 16 44 0 46z" fill="#f3f3f2"/></svg>
  <svg class="d6" width="54" height="54" viewBox="0 0 54 54"><rect width="54" height="54" rx="3" fill="#d9dde0"/><path d="M4 4h10v10H4zM16 4h10v10H16zM30 4h10v10H30zM42 4h9v10h-9zM42 16h9v10h-9zM4 38h10v10H4zM16 38h10v10H16z" fill="#7cc4ea"/><circle cx="23" cy="23" r="16" fill="#a7dcf4" stroke="#222" stroke-width="2.500"/><path d="m34 35 14 13" stroke="#222" stroke-width="5" stroke-linecap="round"/></svg>
  <span class="dsep d7"></span>
  <svg class="d8" width="60" height="60" viewBox="0 0 60 60"><path d="M0 8q0-7 7-7h16q5 0 6 4h24q7 0 7 7v40q0 7-7 7H7q-7 0-7-7z" fill="url(#gFolder)"/><path d="M0 7h60" stroke="#b8924f" stroke-width="2"/></svg>
</div>

<svg class="arrows" width="2880" height="1622" viewBox="0 0 2880 1622" aria-hidden="true">
  <path d="M365 544 450 570 428 583 556 690 548 700 417 597 398 620z" fill="#d13a1f"/>
  <path d="M1563 425 1580 507 1550 495 1512 648 1499 646 1537 491 1508 488z" fill="#d13a1f"/>
  <path d="M2360 913 2390 990 2359 986 2343 1136 2328 1136 2343 984 2316 982z" fill="#d13a1f"/>
</svg>
</body>
</html>
```
FILE: styles.css
```css
* { box-sizing: border-box; }
html, body { margin: 0; padding: 0; }
body {
  width: 2880px;
  height: 1622px;
  overflow: hidden;
  position: relative;
  background: #1b2638;
  font-family: "DejaVu Sans", sans-serif;
  font-size: 19.6px;
  color: #2e3436;
}
u { text-underline-offset: 3px; text-decoration-thickness: 1px; }
.defs { position: absolute; }
.spacer { flex: 1; }

/* wallpaper */
.wallpaper { position: absolute; left: 0; top: 0; }
.wallpaper path { fill: none; stroke-width: 1.5; vector-effect: non-scaling-stroke; }
.gold path { stroke: #ad8847; }
.white path { stroke: #aeb5ba; }
.blue path { stroke: #2c7fb4; }
.dim path { stroke: #24406a; }
.wallpaper .blob { fill: #3b9fdb; stroke: none; }

/* desktop */
.desk-icon { position: absolute; left: 39px; width: 140px; display: flex; flex-direction: column; align-items: center; gap: 14px; }
.desk-fs { top: 81px; }
.desk-home { top: 252px; }
.desk-label { color: #fff; text-shadow: 0 1px 2px #000; }
.handle { position: absolute; left: 0; top: 601px; width: 30px; height: 100px; background: #4f5a71; border-radius: 0 8px 8px 0; box-shadow: 5px 5px 0 rgba(0,0,0,.35); display: flex; flex-direction: column; align-items: center; padding-top: 12px; gap: 8px; padding-left: 2px; }
.handle-dots { display: grid; grid-template-columns: 4px 4px; gap: 6px; }
.handle-dots i { width: 4px; height: 4px; background: #8a94a6; }

/* top panel */
.topbar { position: absolute; left: 0; top: 0; width: 2880px; height: 41px; background: #f6f5f4; border-bottom: 1px solid #8f8e8b; display: flex; align-items: center; padding-left: 3px; }
.top-apps { margin-left: 3px; }
.top-grip { width: 4px; height: 14px; margin: 0 5px 0 6px; border-left: 1px dotted #999; border-right: 1px dotted #999; }
.task { width: 300px; height: 39px; margin-top: -1px; background: #dedcd8; border-radius: 0 0 8px 8px; display: flex; align-items: center; padding-left: 7px; gap: 12px; }
.task-ico { position: relative; width: 24px; height: 24px; display: flex; align-items: center; opacity: .7; }
.task-ico b { position: absolute; right: -6px; bottom: -6px; width: 16px; height: 16px; border-radius: 50%; background: #222; color: #fff; font-size: 12px; text-align: center; line-height: 16px; }
.pager { display: flex; gap: 2px; height: 39px; margin-top: -1px; margin-right: 25px; }
.ws { width: 67px; background: #adacaa; position: relative; }
.ws-on { background: #8a8984; display: flex; align-items: flex-start; padding: 3px 0 0 2px; }
.ws-main { width: 37px; height: 33px; background: #d3d1cd; border: 2px solid #444; display: flex; align-items: center; justify-content: center; }
.ws-vm { opacity: .6; }
.ws-sub { width: 27px; height: 20px; background: #b6b3ae; border: 2px solid #444; margin-left: 1px; }
.ws:nth-child(2) { width: 68px; }
.ws:nth-child(3) { width: 67px; }
.battery { margin-right: 25px; }
.clock { display: flex; flex-direction: column; align-items: center; font-size: 16.500px; line-height: 18px; color: #444; width: 98px; }
.top-user { margin-left: 16px; white-space: nowrap; }

/* windows */
.win { position: absolute; display: flex; flex-direction: column; background: #f6f5f4; border-radius: 7px 7px 0 0; box-shadow: 0 0 0 1px #8a8885, 0 2px 3px rgba(0,0,0,.5); }
.win-main { left: 106px; top: 127px; width: 1549px; height: 1301px; }
.win-iso { left: 1683px; top: 149px; width: 1137px; height: 799px; }
.titlebar { position: relative; display: flex; align-items: center; justify-content: center; flex: none; border-radius: 7px 7px 0 0; }
.title-active { height: 43px; background: #dedcd8; padding-right: 102px; }
.title-idle { height: 46px; background: #f6f5f4; padding-right: 70px; }
.vm-logo { position: absolute; left: 6px; top: 10px; }
.wtitle { margin: 0; font-size: 18px; font-weight: 700; color: #2e3436; }
.wtitle-idle { color: #888a85; }
.wctl { position: absolute; right: 15px; top: 0; height: 100%; display: flex; align-items: center; gap: 21px; }
.wctl-3 { right: 16px; gap: 20px; }

.menubar { height: 36px; flex: none; display: flex; align-items: center; gap: 24px; padding-left: 19px; border-bottom: 1px solid #e8e6e3; }
.toolbar { height: 82px; flex: none; display: flex; align-items: flex-start; padding: 7px 17px 0 14px; }
.tb { width: 56px; height: 51px; flex: none; display: flex; align-items: center; justify-content: center; border-radius: 6px; }
.tb-w { width: 63px; }
.tb-on { background: #dad8d4; }
.tb-gap { margin-left: 9px; }
.tb-tight { margin-left: 3px; }
.tb-sep { width: 1px; height: 51px; background: #dfddd9; margin: 0 13px 0 11px; flex: none; }
.tb-sep2 { margin: 0 14px 0 10px; }

.mbody { flex: 1; display: grid; grid-template-columns: 296px 1185px; grid-template-rows: 1055px 50px; column-gap: 18px; row-gap: 10px; padding-left: 25px; }

.hw-list { margin: 0; padding: 0; list-style: none; background: #fff; border: 1px solid #cfccc7; overflow: hidden; }
.hw { height: 39px; display: flex; align-items: center; gap: 12px; padding-left: 3px; white-space: nowrap; }
.hw svg { width: 36px; height: 36px; flex: none; }
.hw-sel { background: #4a86dc; color: #fff; }
.hw-num { letter-spacing: -.35px; }

.panel { display: flex; flex-direction: column; background: #fff; }
.tabs { display: flex; flex: none; background: #dfddd9; border-bottom: 1px solid #c8c5c0; }
.tabs-main { height: 55px; padding-left: 12px; gap: 14px; }
.tabs-iso { height: 54px; padding-left: 11px; gap: 20px; background: #e9e8e6; }
.tab { display: flex; align-items: center; padding: 0 18px; color: #2e3436; position: relative; border-bottom: 6px solid transparent; border-top: 6px solid transparent; }
.tab-on { border-bottom-color: #4a86dc; }
.tab-dim { color: #8a8c88; padding: 0 18px; }
.tab-fade { color: #bdbdb9; padding: 0 12px; margin-left: 2px; }
.panel-body { flex: 1; padding: 10px 5px 0 9px; }
.vd-title { margin: 0; font-size: 20px; font-weight: 700; line-height: 26px; height: 34px; }
.form { display: grid; grid-template-columns: 149px 1fr; column-gap: 12px; grid-auto-rows: 32px; grid-template-rows: 53px; align-items: center; }
.lbl { text-align: right; }
.lbl, .val { color: #2e3436; }
.src-row { display: flex; gap: 13px; height: 50px; margin-top: -3px; }
.entry { flex: 1; display: flex; align-items: center; background: #fff; border: 1px solid #cdc7c2; border-radius: 6px; padding-left: 12px; }
.entry-text { flex: 1; color: #8c9090; }
.entry-drop { width: 52px; height: 100%; margin-left: 14px; background: #f8f7f6; border-left: 1px solid #cdc7c2; display: flex; align-items: center; justify-content: center; border-radius: 0 6px 6px 0; }
.btn { display: flex; align-items: center; justify-content: center; height: 50px; flex: none; border: 1px solid #cdc7c2; border-radius: 6px; background: linear-gradient(#f8f7f6, #edebe9); box-shadow: 0 1px 1px rgba(0,0,0,.12); color: #2e3436; white-space: nowrap; }
.btn-browse { width: 120px; outline: 1px dotted #8f8f8a; outline-offset: -2px; }
.btn-add { height: 50px; }
.actions { display: flex; justify-content: flex-end; gap: 19px; }
.btn-act { width: 143px; }
.btn-off { background: #faf9f8; color: #a4a6a4; box-shadow: none; }
.advanced { display: flex; align-items: center; gap: 6px; margin: 15px 0 0 26px; height: 32px; }

.ibody { flex: 1; display: grid; grid-template-columns: 299px 787px; grid-template-rows: 652px 50px; column-gap: 2px; row-gap: 10px; padding: 16px 0 0 25px; }
.pool-list { background: #fff; border: 1px solid #d8d5d1; }
.pool { height: 56px; margin: -1px -1px 0; display: flex; align-items: center; padding-left: 6px; }
.pool-sel { background: #4a86dc; color: #fff; }
.pool-pct { width: 33px; font-size: 15px; }
.pool-txt { display: flex; flex-direction: column; }
.pool-name { font-size: 19.3px; line-height: 25px; }
.pool-type { font-size: 16.900px; line-height: 22px; }
.ipanel { display: flex; flex-direction: column; background: #fff; }
.ipanel-body { flex: 1; display: flex; flex-direction: column; padding: 0 1px 0 8px; border-left: 1px solid #d8d5d1; color: #8f918d; }
.info { display: grid; grid-template-columns: 100px 1fr; grid-auto-rows: 33px; align-items: center; margin-top: 6px; }
.vol-row { display: flex; align-items: center; height: 50px; gap: 1px; margin-top: 4px; }
.vol-lbl { width: 105px; }
.ibtn { width: 52px; height: 50px; flex: none; display: flex; align-items: center; justify-content: center; border: 1px solid #dfdcd8; border-radius: 6px; background: #f9f8f7; }
.fill-grey { fill: #9a9a9a; }
.fill-dark { fill: #3a3a3a; }
.fill-pink { fill: #e58a80; }
.tree { flex: 1; margin-top: 6px; border: 1px solid #d3d0cc; }
.tree-head { height: 37px; display: flex; align-items: center; border-bottom: 1px solid #f0efed; font-weight: 700; color: #b2b3b0; font-size: 19.6px; }
.col { height: 100%; display: flex; align-items: center; gap: 6px; padding-left: 10px; border-right: 1px solid #f0efed; }
.col-a { width: 141px; }
.col-b { width: 94px; }
.col-c { width: 127px; }
.col:last-child { border-right: 0; }
.ifoot { grid-column: 1 / 3; display: flex; gap: 2px; }
.btn-dim { background: #f8f7f6; color: #8f918d; box-shadow: none; }
.btn-bl { width: 177px; margin-right: 9px; }
.btn-cn { width: 115px; margin-right: 9px; }
.btn-cv { width: 201px; color: #c8c8c5; }

/* dock */
.dock { position: absolute; left: 1211px; top: 1547px; width: 458px; height: 75px; background: #f6f5f4; border: 1px solid #aaa9a6; border-bottom: 0; display: flex; align-items: flex-start; padding: 6px 0 0 6px; }
.dock > * { flex: none; }
.dsep { width: 3px; height: 52px; background: #8f8f8d; margin-top: 6px; }
.d2 { margin-left: 12px; }
.d3 { margin: 3px 0 0 10px; }
.d4 { margin: 2px 0 0 21px; }
.d5 { margin: -1px 0 0 19px; }
.d6 { margin: 3px 0 0 13px; }
.d7 { margin-left: 15px; }
.d8 { margin-left: 9px; }

.arrows { position: absolute; left: 0; top: 0; pointer-events: none; }
```
